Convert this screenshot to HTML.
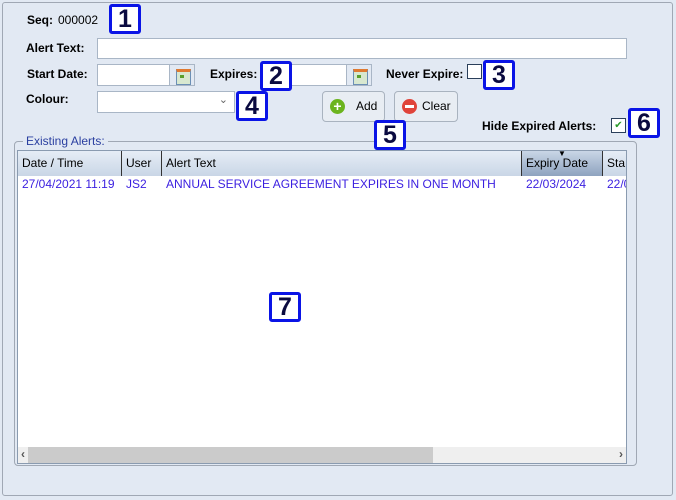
<!DOCTYPE html>
<html><head><style>
*{margin:0;padding:0;box-sizing:border-box}
body{width:676px;height:500px;background:#e2e9f3;font-family:"Liberation Sans",sans-serif;font-size:12px;position:relative;overflow:hidden;color:#000}
.a{position:absolute}
.lbl{font-weight:bold;font-size:12px}
.inp{background:#fff;border:1px solid #a9b6c6}
.badge{position:absolute;width:32px;height:30px;border:3px solid #0a14e6;background:#fff;border-radius:3px;font-weight:bold;font-size:25px;line-height:24px;text-align:center;color:#0a0a40}
.cal{position:absolute;width:26px;height:22px;background:#e2e9f3;border:1px solid #a9b6c6}
.cal:after{content:"";position:absolute;left:6px;top:4px;width:13px;height:12px;background:#d8e8d0;border:1px solid #6b8fb5;border-top:3px solid #e07a30}
.cal:before{content:"";position:absolute;left:10px;top:10px;width:4px;height:3px;background:#5aa02a;z-index:1}
.btn{position:absolute;border:1px solid #a9b3bf;border-radius:4px;background:#e8edf3;height:31px}
.th{position:absolute;top:0;height:25px;line-height:24px;padding-left:4px;border-right:1px solid #333;background:linear-gradient(#e6edf6,#c9d6e6)}
.td{position:absolute;top:26px;color:#3a1ee0;padding-left:4px;line-height:14px}
</style></head><body>
<div class="a" style="left:2px;top:2px;width:671px;height:494px;border:1px solid #a0a8b4;border-radius:3px"></div>
<div class="a lbl" style="left:27px;top:13px">Seq:</div>
<div class="a" style="left:58px;top:13px">000002</div>
<div class="a lbl" style="left:26px;top:41px">Alert Text:</div>
<div class="a inp" style="left:97px;top:38px;width:530px;height:21px"></div>
<div class="a lbl" style="left:27px;top:67px">Start Date:</div>
<div class="a inp" style="left:97px;top:64px;width:98px;height:22px"></div>
<div class="cal" style="left:169px;top:64px"></div>
<div class="a lbl" style="left:210px;top:67px">Expires:</div>
<div class="a inp" style="left:290px;top:64px;width:82px;height:22px"></div>
<div class="cal" style="left:346px;top:64px"></div>
<div class="a lbl" style="left:386px;top:67px">Never Expire:</div>
<div class="a" style="left:467px;top:64px;width:15px;height:15px;border:1px solid #2a3f5a;background:#fff"></div>
<div class="a lbl" style="left:26px;top:92px">Colour:</div>
<div class="a inp" style="left:97px;top:91px;width:138px;height:22px"><span class="a" style="right:6px;top:1px;color:#666;font-size:11px">&#8964;</span></div>
<div class="btn" style="left:322px;top:91px;width:63px"><div class="a" style="left:7px;top:7px;width:15px;height:15px;border-radius:50%;background:#6cb41e;color:#fff;font-weight:bold;font-size:14px;line-height:14px;text-align:center">+</div><div class="a" style="left:33px;top:7px">Add</div></div>
<div class="btn" style="left:394px;top:91px;width:64px"><div class="a" style="left:7px;top:7px;width:15px;height:15px;border-radius:50%;background:#e0443a"><div class="a" style="left:3px;top:6px;width:9px;height:3px;background:#fff"></div></div><div class="a" style="left:27px;top:7px">Clear</div></div>
<div class="a lbl" style="left:482px;top:119px">Hide Expired Alerts:</div>
<div class="a" style="left:611px;top:118px;width:15px;height:15px;border:1px solid #2a3f5a;background:#fff;color:#2a9a2a;font-size:10px;line-height:13px;text-align:center">&#10004;</div>
<div class="a" style="left:14px;top:141px;width:623px;height:325px;border:1px solid #a0a8b4;border-radius:4px"></div>
<div class="a" style="left:23px;top:134px;background:#e2e9f3;color:#2a3fa0;padding:0 3px">Existing Alerts:</div>
<div class="a" style="left:17px;top:150px;width:610px;height:314px;background:#fff;border:1px solid #8a9bb0;overflow:hidden">
<div class="th" style="left:0;width:104px">Date / Time</div>
<div class="th" style="left:104px;width:40px">User</div>
<div class="th" style="left:144px;width:360px">Alert Text</div>
<div class="th" style="left:504px;width:81px;background:linear-gradient(#c9d6e6,#8ea3bf)">Expiry Date<span class="a" style="left:36px;top:-9px;font-size:8px">&#9660;</span></div>
<div class="th" style="left:585px;width:40px;border-right:none">Sta</div>
<div class="td" style="left:0">27/04/2021 11:19</div>
<div class="td" style="left:104px">JS2</div>
<div class="td" style="left:144px">ANNUAL SERVICE AGREEMENT EXPIRES IN ONE MONTH</div>
<div class="td" style="left:504px">22/03/2024</div>
<div class="td" style="left:585px">22/03</div>
<div class="a" style="left:0;top:296px;width:608px;height:16px;background:#efefef"><div class="a" style="left:10px;top:0;width:405px;height:16px;background:#cbcbcb"></div><span class="a" style="left:3px;top:0;color:#555;font-weight:bold">&#8249;</span><span class="a" style="right:3px;top:0;color:#555;font-weight:bold">&#8250;</span></div>
</div>
<div class="badge" style="left:109px;top:4px">1</div>
<div class="badge" style="left:260px;top:61px">2</div>
<div class="badge" style="left:483px;top:60px">3</div>
<div class="badge" style="left:236px;top:91px">4</div>
<div class="badge" style="left:374px;top:120px">5</div>
<div class="badge" style="left:628px;top:108px">6</div>
<div class="badge" style="left:269px;top:292px">7</div>
</body></html>
